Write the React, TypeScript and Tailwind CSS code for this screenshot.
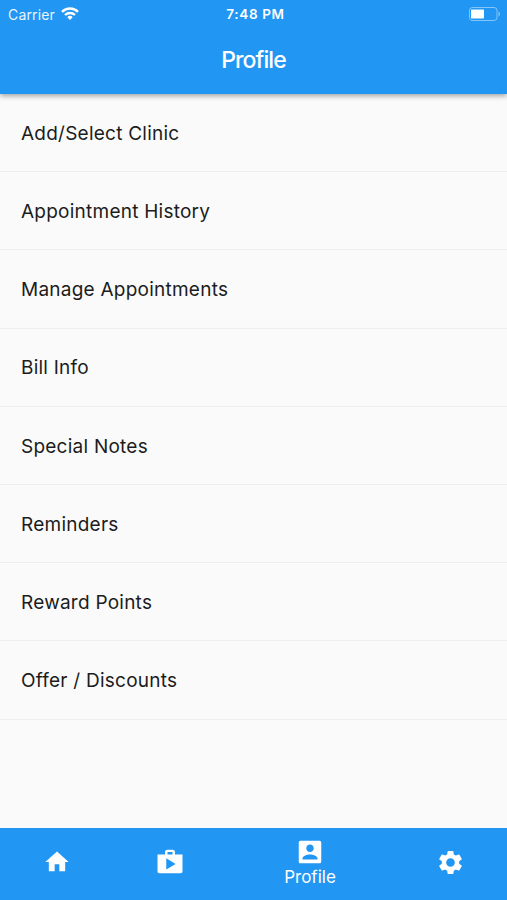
import React from "react";
import { MdHome, MdSettings } from "react-icons/md";

const menuItems = [
  "Add/Select Clinic",
  "Appointment History",
  "Manage Appointments",
  "Bill Info",
  "Special Notes",
  "Reminders",
  "Reward Points",
  "Offer / Discounts"
];

const StatusBar: React.FC = () => (
  <div className="relative flex h-[27px] items-center justify-between pl-2 pr-1.5">
    <div className="flex items-center gap-1.5">
      <span className="pt-px text-[14px] tracking-[0.15px] opacity-90">Carrier</span>
      <svg width="18" height="13" viewBox="0 0 18 13" fill="none" stroke="currentColor" strokeWidth="2.4">
        <path d="M1 4.8a11.4 11.4 0 0 1 16 0" />
        <path d="M4 8a7.2 7.2 0 0 1 10 0" />
        <path d="M9 13 6.3 10.2a3.8 3.8 0 0 1 5.4 0Z" fill="currentColor" stroke="none" />
      </svg>
    </div>
    <span className="absolute left-1/2 -translate-x-1/2 whitespace-nowrap pl-1 pt-px text-[13.5px] font-semibold tracking-[0.65px]">
      7:48 PM
    </span>
    <svg width="32" height="14" viewBox="0 0 32 14" fill="none">
      <rect x="0.5" y="0.5" width="27.5" height="13" rx="3" stroke="currentColor" strokeOpacity="0.45" />
      <rect x="2" y="2.5" width="13" height="9" rx="0.8" fill="currentColor" />
      <path d="M29.5 4.5c2 .8 2 4.2 0 5Z" fill="currentColor" fillOpacity="0.45" />
    </svg>
  </div>
);

const BottomNav: React.FC = () => (
  <nav className="flex h-[72px] items-center bg-[#2196f3] text-white">
    <button className="flex w-[113px] justify-center pb-1">
      <MdHome size={28} />
    </button>
    <button className="flex w-[113px] justify-center pb-1">
      <svg width="30" height="30" viewBox="0 0 24 24" fill="currentColor">
        <path d="M16 6V4c0-1-.8-1.8-1.8-1.8H9.8C8.800 2.200 8 3 8 4v2H2v13.600c0 .8.600 1.400 1.400 1.400h17.200c.8 0 1.400-.6 1.400-1.400V6h-6zm-6-2h4v2h-4V4zM9 18V9l7.500 4.500L9 18z" />
      </svg>
    </button>
    <button className="flex w-[168px] flex-col items-center pb-1">
      <svg width="30" height="30" viewBox="0 0 24 24" fill="currentColor">
        <path d="M3 4.300v15.400c0 .7.600 1.300 1.300 1.300h15.400c.7 0 1.300-.6 1.300-1.300V4.300c0-.7-.6-1.300-1.300-1.300H4.300C3.600 3 3 3.600 3 4.300zM15 9c0 1.660-1.340 3-3 3s-3-1.340-3-3 1.340-3 3-3 3 1.340 3 3zm-9 8c0-2 4-3.100 6-3.100s6 1.100 6 3.100v1H6v-1z" />
      </svg>
      <span className="text-[17px] leading-5">Profile</span>
    </button>
    <button className="flex w-[113px] justify-center pb-1">
      <MdSettings size={29} />
    </button>
  </nav>
);

const App: React.FC = () => {
  return (
    <div className="flex h-[900px] w-[507px] flex-col bg-[#fafafa] font-['Inter',sans-serif]">
      <header className="h-[94px] bg-[#2196f3] text-white shadow-[0_2px_5px_rgba(0,0,0,0.35)]">
        <StatusBar />
        <h1 className="pt-[17px] text-center text-[23px] font-medium leading-8 tracking-[-0.9px]">
          Profile
        </h1>
      </header>
      <ul className="flex-1">
        {menuItems.map((item) => (
          <li
            key={item}
            className="flex h-[78.2px] items-center border-b border-[#eeeeee] pl-[21px] pt-[3px] text-[19px] tracking-[0.24px] text-[#1c1c1c]"
          >
            {item}
          </li>
        ))}
      </ul>
      <BottomNav />
    </div>
  );
};

export default App;
